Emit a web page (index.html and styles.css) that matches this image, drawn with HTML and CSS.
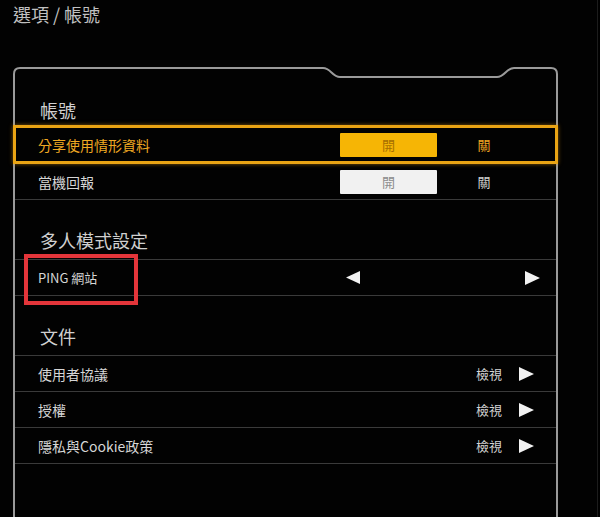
FILE: index.html
```html
<!DOCTYPE html>
<html lang="zh-Hant">
<head>
<meta charset="utf-8">
<title>選項 / 帳號</title>
<link rel="stylesheet" href="styles.css">
</head>
<body>
<div class="screen">
  <div class="title">選項 / 帳號</div>
  <div class="panel">
    <svg class="panel-top" width="545" height="14" viewBox="0 0 545 14">
      <path d="M1,14 V7 Q1,1 7,1 H310 C318,1 319,10 327,10 H484 C492,10 493,1 501,1 H538 Q544,1 544,7 V14" fill="none" stroke="#9a9a9a" stroke-width="2"/>
    </svg>
    <div class="panel-body">
      <div class="section-head first">帳號</div>
      <div class="row selected">
        <span class="label">分享使用情形資料</span>
        <div class="toggle">
          <span class="toggle-on">開</span>
          <span class="toggle-off">關</span>
        </div>
      </div>
      <div class="row">
        <span class="label">當機回報</span>
        <div class="toggle">
          <span class="toggle-on">開</span>
          <span class="toggle-off">關</span>
        </div>
      </div>

      <div class="section-head">多人模式設定</div>
      <div class="row ping">
        <span class="label small">PING 網站</span>
        <div class="stepper">
          <svg width="14" height="13" viewBox="0 0 14 13"><polygon points="14,0 0,6.5 14,13" fill="#f2f2f2"/></svg>
          <svg width="15" height="14" viewBox="0 0 15 14"><polygon points="0,0 15,7 0,14" fill="#f2f2f2"/></svg>
        </div>
        <div class="highlight-box"></div>
      </div>

      <div class="section-head">文件</div>
      <div class="row">
        <span class="label">使用者協議</span>
        <div class="view"><span>檢視</span><svg width="15" height="14" viewBox="0 0 15 14"><polygon points="0,0 15,7 0,14" fill="#f2f2f2"/></svg></div>
      </div>
      <div class="row">
        <span class="label">授權</span>
        <div class="view"><span>檢視</span><svg width="15" height="14" viewBox="0 0 15 14"><polygon points="0,0 15,7 0,14" fill="#f2f2f2"/></svg></div>
      </div>
      <div class="row">
        <span class="label">隱私與Cookie政策</span>
        <div class="view"><span>檢視</span><svg width="15" height="14" viewBox="0 0 15 14"><polygon points="0,0 15,7 0,14" fill="#f2f2f2"/></svg></div>
      </div>
    </div>
  </div>
</div>
</body>
</html>
```

FILE: styles.css
```css
html, body {
  margin: 0;
  padding: 0;
  background: #000;
}

body {
  font-family: "Noto Sans CJK TC", "Noto Sans", sans-serif;
  color: #d8d8d8;
}

.screen {
  width: 598px;
  height: 517px;
  box-sizing: border-box;
  border-right: 1px solid #1c1c1c;
  overflow: hidden;
  background: #020202;
}

.title {
  padding: 3px 0 0 13px;
  font-size: 18px;
  line-height: 22px;
  color: #c0c0c0;
}

.panel {
  margin: 42px 0 0 13px;
  width: 545px;
}

.panel-top {
  display: block;
}

.panel-body {
  height: 450px;
  border-left: 2px solid #9a9a9a;
  border-right: 2px solid #9a9a9a;
}

.section-head {
  height: 60px;
  box-sizing: border-box;
  border-bottom: 1px solid #3a3a3a;
  display: flex;
  align-items: flex-end;
  padding: 0 0 9px 25px;
  font-size: 18px;
  line-height: 20px;
  color: #d0d0d0;
}

.section-head.first {
  height: 44px;
  padding-bottom: 5px;
  border-bottom: none;
}

.row {
  position: relative;
  height: 36px;
  box-sizing: border-box;
  border-bottom: 1px solid #3a3a3a;
  display: flex;
  align-items: center;
  padding: 0 25px 0 23px;
  font-size: 14px;
  color: #d6d6d6;
}

.row.selected {
  height: 39px;
  margin: 0 -2px;
  border: 3px solid #eaa414;
  padding: 0 24px 0 22px;
  color: #f0a822;
  box-shadow: 0 0 4px rgba(240, 160, 20, 0.55);
}

.label.small {
  font-size: 13px;
}

.toggle {
  margin-left: auto;
  display: flex;
  align-items: center;
}

.toggle-on {
  width: 97px;
  height: 24px;
  display: flex;
  align-items: center;
  justify-content: center;
  font-size: 13px;
  background: #f1f1f1;
  color: #8c8c8c;
  border-radius: 1px;
}

.selected .toggle-on {
  background: #f6b505;
  color: #a66f00;
}

.toggle-off {
  width: 94px;
  text-align: center;
  font-size: 13px;
  color: #cfcfcf;
}

.selected .toggle-off {
  color: #eea523;
}

.stepper {
  margin-left: auto;
  width: 194px;
  margin-right: -9px;
  display: flex;
  justify-content: space-between;
  align-items: center;
}

.stepper svg,
.view svg {
  display: block;
}

.highlight-box {
  position: absolute;
  left: 9px;
  top: -6px;
  width: 114px;
  height: 51px;
  box-sizing: border-box;
  border: 4px solid #e3353a;
}

.view {
  margin-left: auto;
  margin-right: -3px;
  display: flex;
  align-items: center;
  gap: 17px;
  font-size: 13px;
  color: #d4d4d4;
}
```
